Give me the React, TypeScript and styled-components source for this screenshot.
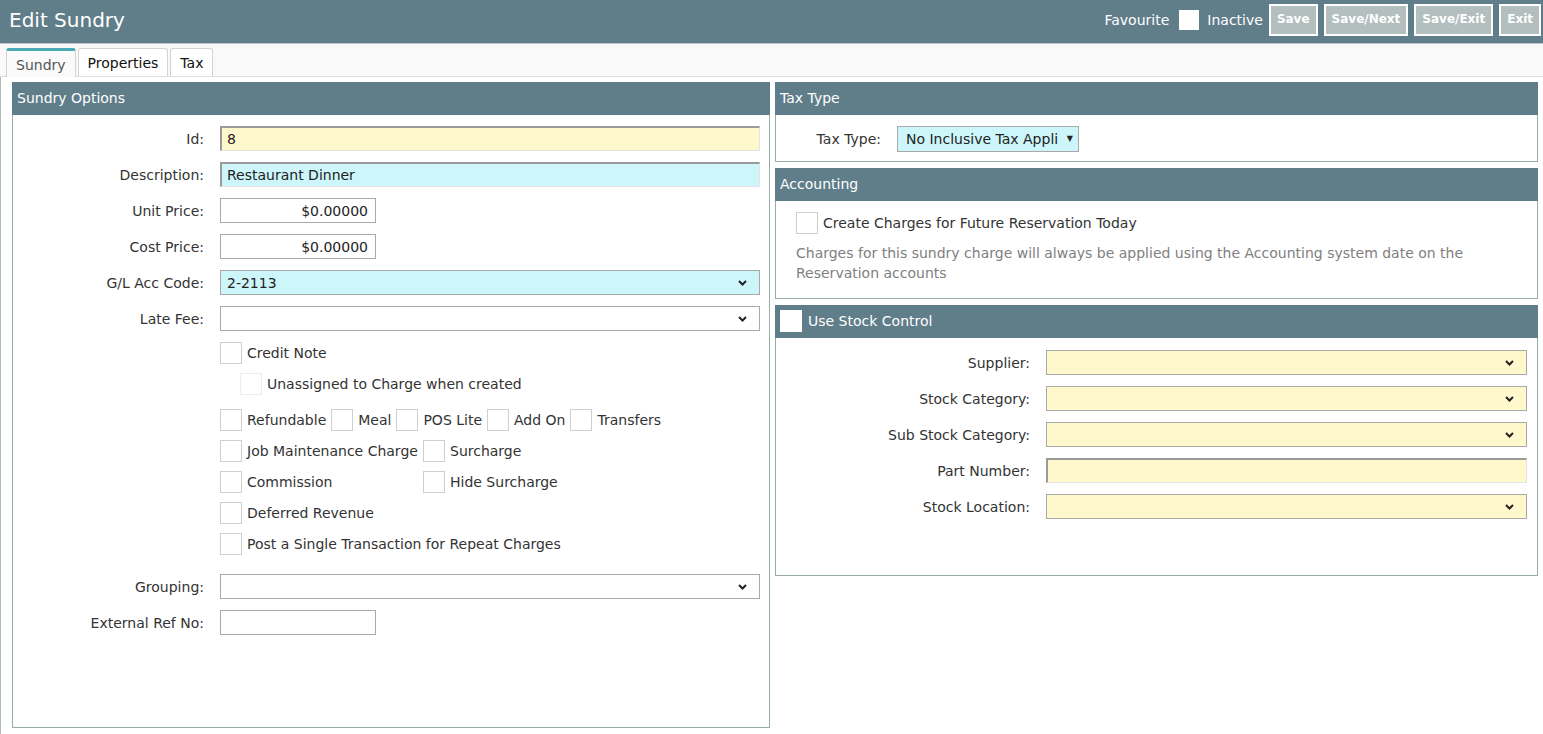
import React from "react";
import styled, { createGlobalStyle } from "styled-components";

const Global = createGlobalStyle`
  html, body { margin: 0; padding: 0; background: #fff; }
  body { font-family: "DejaVu Sans", Verdana, sans-serif; font-size: 14px; color: #333; }
  * { box-sizing: border-box; }
`;

const slate = "#607d8a";
const panelBorder = "#9aabab";

const Page = styled.div`
  width: 1543px;
  height: 734px;
  overflow: hidden;
  display: flex;
  flex-direction: column;
`;

const TopBar = styled.header`
  height: 44px;
  background: ${slate};
  border-bottom: 1px solid #b9c6cb;
  display: flex;
  align-items: center;
  justify-content: space-between;
  padding-left: 9px;
  flex-shrink: 0;
`;

const Title = styled.h1`
  margin: 0;
  font-size: 20px;
  font-weight: normal;
  color: #fff;
  margin-top: -3px;
`;

const Actions = styled.div`
  display: flex;
  align-items: center;
  gap: 6px;
  margin-right: 2px;
  margin-top: -3px;
`;

const TopLabel = styled.span`
  color: #fff;
  font-size: 14px;
`;

const TopCheck = styled.span`
  width: 20px;
  height: 20px;
  background: #fff;
  display: inline-block;
  margin: 0 2px 0 4px;
`;

const ActionButton = styled.button`
  height: 32px;
  padding: 0 6px 3px;
  background: #b3bebe;
  border: 2px solid #fff;
  color: #fff;
  font-family: inherit;
  font-size: 12px;
  font-weight: bold;
  cursor: pointer;
`;

const TabStrip = styled.nav`
  display: flex;
  align-items: flex-end;
  gap: 2px;
  height: 33px;
  padding-left: 6px;
  background: #f9f9f9;
  border-bottom: 1px solid #dedede;
  flex-shrink: 0;
`;

const Tab = styled.div<{ $active?: boolean }>`
  height: ${(p) => (p.$active ? 29 : 28)}px;
  margin-bottom: ${(p) => (p.$active ? -1 : 0)}px;
  padding: 0 9px;
  display: flex;
  align-items: center;
  font-size: 14px;
  color: ${(p) => (p.$active ? "#555" : "#111")};
  background: ${(p) => (p.$active ? "#fafafa" : "#fff")};
  border: 1px solid #d3d3d3;
  border-bottom: none;
  border-top: ${(p) => (p.$active ? "3px solid #4aaab5" : "1px solid #d3d3d3")};
  border-radius: 3px 3px 0 0;
  padding-top: ${(p) => (p.$active ? 2 : 0)}px;
`;

const Content = styled.main`
  flex: 1;
  display: grid;
  grid-template-columns: 758px 763px;
  column-gap: 5px;
  padding: 5px 6px 6px 11px;
  border-left: 1px solid #b0b8b8;
  align-items: start;
`;

const Column = styled.div`
  display: flex;
  flex-direction: column;
  gap: 6px;
`;

const Panel = styled.section`
  display: flex;
  flex-direction: column;
`;

const PanelHead = styled.div`
  height: 33px;
  background: ${slate};
  color: #fff;
  font-size: 14px;
  display: flex;
  align-items: center;
  gap: 6px;
  padding-left: 5px;
  padding-bottom: 2px;
`;

const PanelBody = styled.div<{ $height?: number; $pad?: string }>`
  background: #fff;
  border: 1px solid ${panelBorder};
  border-top: none;
  height: ${(p) => (p.$height ? `${p.$height}px` : "auto")};
  padding: ${(p) => p.$pad || "11px 9px 0 0"};
`;

const FormGrid = styled.div<{ $label: number; $gap?: number }>`
  display: grid;
  grid-template-columns: ${(p) => p.$label}px 1fr;
  column-gap: 16px;
  row-gap: ${(p) => p.$gap ?? 11}px;
  align-items: center;
`;

const Label = styled.label`
  text-align: right;
  font-size: 14px;
  color: #333;
  white-space: nowrap;
`;

const Field = styled.div<{ $bg?: string; $width?: number; $inset?: boolean; $align?: string }>`
  height: 25px;
  width: ${(p) => (p.$width ? `${p.$width}px` : "100%")};
  background: ${(p) => p.$bg || "#fff"};
  border: 1px solid #a9a9a9;
  ${(p) =>
    p.$inset
      ? `border-top: 2px solid #9a9a9a; border-left: 2px solid #9a9a9a; border-right: 1px solid #e4e4e4; border-bottom: 1px solid #e4e4e4;`
      : ""}
  display: flex;
  align-items: center;
  justify-content: ${(p) => (p.$align === "right" ? "flex-end" : "space-between")};
  padding: 0 ${(p) => (p.$align === "right" ? 7 : 12)}px 0 ${(p) => (p.$inset ? 5 : 6)}px;
  font-size: 14px;
  color: #222;
`;

const Chevron = () => (
  <svg width="9" height="6" viewBox="0 0 9 6">
    <polyline points="1,1 4.5,4.5 8,1" fill="none" stroke="#222" strokeWidth="2" />
  </svg>
);

const Select: React.FC<{ bg?: string; value?: string }> = ({ bg, value }) => (
  <Field $bg={bg}>
    <span>{value}</span>
    <Chevron />
  </Field>
);

const Options = styled.div`
  display: flex;
  flex-direction: column;
  padding-left: 207px;
  margin-top: 11px;
`;

const OptRow = styled.div<{ $indent?: number; $mt?: number }>`
  display: flex;
  align-items: center;
  height: 22px;
  padding-left: ${(p) => p.$indent ?? 0}px;
  margin-top: ${(p) => p.$mt ?? 9}px;
`;

const OptGrid = styled.div`
  display: grid;
  grid-template-columns: 203px auto;
  grid-auto-rows: 22px;
  row-gap: 9px;
  margin-top: 9px;
  align-items: center;
`;

const Check = styled.span<{ $disabled?: boolean; $white?: boolean }>`
  width: 22px;
  height: 22px;
  flex-shrink: 0;
  background: #fff;
  border: 1px solid ${(p) => (p.$white ? "#fff" : p.$disabled ? "#ececec" : "#cfcfcf")};
  display: inline-block;
`;

const CheckText = styled.span`
  margin: 0 5px;
  font-size: 14px;
  color: #333;
  white-space: nowrap;
`;

const Pair = styled.span`
  display: inline-flex;
  align-items: center;
`;

const Opt: React.FC<{ label: string; disabled?: boolean }> = ({ label, disabled }) => (
  <Pair>
    <Check $disabled={disabled} />
    <CheckText>{label}</CheckText>
  </Pair>
);

const LowerForm = styled.div`
  margin-top: 19px;
`;

const TaxSelect = styled.div`
  height: 26px;
  width: 182px;
  background: #cdf6fb;
  border: 1px solid #a9a9a9;
  display: flex;
  align-items: center;
  justify-content: space-between;
  padding: 0 5px 0 8px;
  font-size: 14px;
  color: #222;
  overflow: hidden;
  white-space: nowrap;
`;

const Tri = styled.span`
  font-size: 8px;
  margin-top: -2px;
`;

const AcctRow = styled.div`
  display: flex;
  align-items: center;
  height: 22px;
`;

const Note = styled.p`
  margin: 10px 0 0;
  color: #808080;
  font-size: 14px;
  line-height: 19.5px;
  width: 700px;
`;

const yellow = "#fff8cc";
const cyan = "#cdf6fb";

export default function App() {
  return (
    <Page>
      <Global />
      <TopBar>
        <Title>Edit Sundry</Title>
        <Actions>
          <TopLabel>Favourite</TopLabel>
          <TopCheck />
          <TopLabel>Inactive</TopLabel>
          <ActionButton>Save</ActionButton>
          <ActionButton>Save/Next</ActionButton>
          <ActionButton>Save/Exit</ActionButton>
          <ActionButton>Exit</ActionButton>
        </Actions>
      </TopBar>
      <TabStrip>
        <Tab $active>Sundry</Tab>
        <Tab>Properties</Tab>
        <Tab>Tax</Tab>
      </TabStrip>
      <Content>
        <Panel>
          <PanelHead>Sundry Options</PanelHead>
          <PanelBody $height={613}>
            <FormGrid $label={191}>
              <Label>Id:</Label>
              <Field $bg={yellow} $inset>8</Field>
              <Label>Description:</Label>
              <Field $bg={cyan} $inset>Restaurant Dinner</Field>
              <Label>Unit Price:</Label>
              <Field $width={156} $align="right">$0.00000</Field>
              <Label>Cost Price:</Label>
              <Field $width={156} $align="right">$0.00000</Field>
              <Label>G/L Acc Code:</Label>
              <Select bg={cyan} value="2-2113" />
              <Label>Late Fee:</Label>
              <Select />
            </FormGrid>
            <Options>
              <OptRow $mt={0}>
                <Opt label="Credit Note" />
              </OptRow>
              <OptRow $indent={20}>
                <Opt label="Unassigned to Charge when created" disabled />
              </OptRow>
              <OptRow $mt={14}>
                <Opt label="Refundable" />
                <Opt label="Meal" />
                <Opt label="POS Lite" />
                <Opt label="Add On" />
                <Opt label="Transfers" />
              </OptRow>
              <OptGrid>
                <Opt label="Job Maintenance Charge" />
                <Opt label="Surcharge" />
                <Opt label="Commission" />
                <Opt label="Hide Surcharge" />
              </OptGrid>
              <OptRow>
                <Opt label="Deferred Revenue" />
              </OptRow>
              <OptRow>
                <Opt label="Post a Single Transaction for Repeat Charges" />
              </OptRow>
            </Options>
            <LowerForm>
              <FormGrid $label={191}>
                <Label>Grouping:</Label>
                <Select />
                <Label>External Ref No:</Label>
                <Field $width={156} />
              </FormGrid>
            </LowerForm>
          </PanelBody>
        </Panel>
        <Column>
          <Panel>
            <PanelHead>Tax Type</PanelHead>
            <PanelBody $height={47}>
              <FormGrid $label={105}>
                <Label>Tax Type:</Label>
                <TaxSelect>
                  <span>No Inclusive Tax Appli</span>
                  <Tri>▼</Tri>
                </TaxSelect>
              </FormGrid>
            </PanelBody>
          </Panel>
          <Panel>
            <PanelHead>Accounting</PanelHead>
            <PanelBody $height={98} $pad="11px 10px 0 20px">
              <AcctRow>
                <Check />
                <CheckText>Create Charges for Future Reservation Today</CheckText>
              </AcctRow>
              <Note>
                Charges for this sundry charge will always be applied using the Accounting system date on the
                Reservation accounts
              </Note>
            </PanelBody>
          </Panel>
          <Panel>
            <PanelHead>
              <Check $white />
              Use Stock Control
            </PanelHead>
            <PanelBody $height={238} $pad="12px 10px 0 0">
              <FormGrid $label={254} $gap={11}>
                <Label>Supplier:</Label>
                <Select bg={yellow} />
                <Label>Stock Category:</Label>
                <Select bg={yellow} />
                <Label>Sub Stock Category:</Label>
                <Select bg={yellow} />
                <Label>Part Number:</Label>
                <Field $bg={yellow} $inset />
                <Label>Stock Location:</Label>
                <Select bg={yellow} />
              </FormGrid>
            </PanelBody>
          </Panel>
        </Column>
      </Content>
    </Page>
  );
}
